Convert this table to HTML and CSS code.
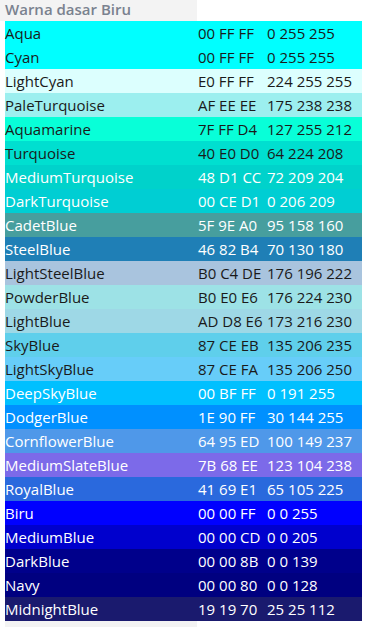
FILE: index.html
```html
<!DOCTYPE html>
<html>
<head>
<meta charset="utf-8">
<link rel="stylesheet" href="styles.css">
</head>
<body>
<div class="page">
  <div class="caption">Warna dasar Biru</div>
  <div class="table">
    <div class="row dark" style="background:#00ffff"><span>Aqua</span><span>00 FF FF</span><span>0 255 255</span></div>
    <div class="row dark" style="background:#00ffff"><span>Cyan</span><span>00 FF FF</span><span>0 255 255</span></div>
    <div class="row dark" style="background:#dcfffe"><span>LightCyan</span><span>E0 FF FF</span><span>224 255 255</span></div>
    <div class="row dark" style="background:#9cefef"><span>PaleTurquoise</span><span>AF EE EE</span><span>175 238 238</span></div>
    <div class="row dark" style="background:#08ffd8"><span>Aquamarine</span><span>7F FF D4</span><span>127 255 212</span></div>
    <div class="row dark" style="background:#00dfd0"><span>Turquoise</span><span>40 E0 D0</span><span>64 224 208</span></div>
    <div class="row light" style="background:#00d2cb"><span>MediumTurquoise</span><span>48 D1 CC</span><span>72 209 204</span></div>
    <div class="row light" style="background:#00ced3"><span>DarkTurquoise</span><span>00 CE D1</span><span>0 206 209</span></div>
    <div class="row light" style="background:#479e9e"><span>CadetBlue</span><span>5F 9E A0</span><span>95 158 160</span></div>
    <div class="row light" style="background:#1f7fb6"><span>SteelBlue</span><span>46 82 B4</span><span>70 130 180</span></div>
    <div class="row dark" style="background:#a9c4de"><span>LightSteelBlue</span><span>B0 C4 DE</span><span>176 196 222</span></div>
    <div class="row dark" style="background:#9de2e6"><span>PowderBlue</span><span>B0 E0 E6</span><span>176 224 230</span></div>
    <div class="row dark" style="background:#9ed8e6"><span>LightBlue</span><span>AD D8 E6</span><span>173 216 230</span></div>
    <div class="row dark" style="background:#5fcfeb"><span>SkyBlue</span><span>87 CE EB</span><span>135 206 235</span></div>
    <div class="row dark" style="background:#67cdf9"><span>LightSkyBlue</span><span>87 CE FA</span><span>135 206 250</span></div>
    <div class="row light" style="background:#00c0ff"><span>DeepSkyBlue</span><span>00 BF FF</span><span>0 191 255</span></div>
    <div class="row light" style="background:#0090ff"><span>DodgerBlue</span><span>1E 90 FF</span><span>30 144 255</span></div>
    <div class="row light" style="background:#4f98e9"><span>CornflowerBlue</span><span>64 95 ED</span><span>100 149 237</span></div>
    <div class="row light" style="background:#7c6ae9"><span>MediumSlateBlue</span><span>7B 68 EE</span><span>123 104 238</span></div>
    <div class="row light" style="background:#2a69dd"><span>RoyalBlue</span><span>41 69 E1</span><span>65 105 225</span></div>
    <div class="row light" style="background:#0000ff"><span>Biru</span><span>00 00 FF</span><span>0 0 255</span></div>
    <div class="row light" style="background:#0000cd"><span>MediumBlue</span><span>00 00 CD</span><span>0 0 205</span></div>
    <div class="row light" style="background:#00008b"><span>DarkBlue</span><span>00 00 8B</span><span>0 0 139</span></div>
    <div class="row light" style="background:#000080"><span>Navy</span><span>00 00 80</span><span>0 0 128</span></div>
    <div class="row light" style="background:#1a1a6e"><span>MidnightBlue</span><span>19 19 70</span><span>25 25 112</span></div>
  </div>
  <div class="footer"></div>
</div>
</body>
</html>
```
FILE: styles.css
```css
html, body {
  margin: 0;
  padding: 0;
  background: #ffffff;
}
.page {
  font-family: "Open Sans", "Noto Sans", sans-serif;
  font-size: 15px;
  width: 367px;
}
.caption {
  width: 192px;
  height: 21px;
  padding-left: 5px;
  background: #f3f3f3;
  color: #7a828f;
  font-weight: 600;
  font-size: 15px;
  line-height: 19px;
}
.table {
  margin-left: 5px;
  width: 357px;
}
.row {
  display: grid;
  grid-template-columns: 193px 69px 95px;
  height: 24px;
  line-height: 24px;
}
.row span {
  white-space: nowrap;
}
.row.dark {
  color: #1a1a1a;
}
.row.light {
  color: #ffffff;
}
.footer {
  margin-left: 5px;
  width: 192px;
  height: 8px;
  background: #f3f3f3;
}
```
